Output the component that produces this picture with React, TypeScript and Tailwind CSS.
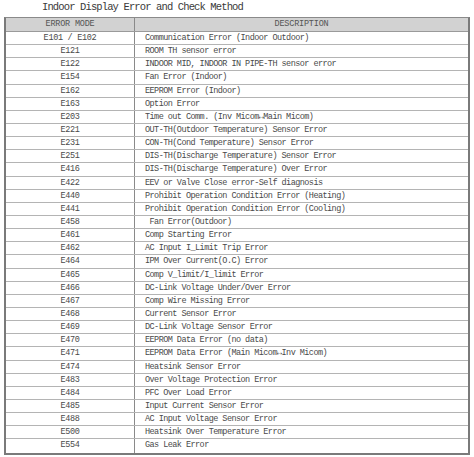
import React from "react";

const rows: [string, string][] = [
  ["E101 / E102", "Communication Error (Indoor Outdoor)"],
  ["E121", "ROOM TH sensor error"],
  ["E122", "INDOOR MID, INDOOR IN PIPE-TH sensor error"],
  ["E154", "Fan Error (Indoor)"],
  ["E162", "EEPROM Error (Indoor)"],
  ["E163", "Option Error"],
  ["E203", "Time out Comm. (Inv Micom\u2194Main Micom)"],
  ["E221", "OUT-TH(Outdoor Temperature) Sensor Error"],
  ["E231", "CON-TH(Cond Temperature) Sensor Error"],
  ["E251", "DIS-TH(Discharge Temperature) Sensor Error"],
  ["E416", "DIS-TH(Discharge Temperature) Over Error"],
  ["E422", "EEV or Valve Close error-Self diagnosis"],
  ["E440", "Prohibit Operation Condition Error (Heating)"],
  ["E441", "Prohibit Operation Condition Error (Cooling)"],
  ["E458", " Fan Error(Outdoor)"],
  ["E461", "Comp Starting Error"],
  ["E462", "AC Input I_Limit Trip Error"],
  ["E464", "IPM Over Current(O.C) Error"],
  ["E465", "Comp V_limit/I_limit Error"],
  ["E466", "DC-Link Voltage Under/Over Error"],
  ["E467", "Comp Wire Missing Error"],
  ["E468", "Current Sensor Error"],
  ["E469", "DC-Link Voltage Sensor Error"],
  ["E470", "EEPROM Data Error (no data)"],
  ["E471", "EEPROM Data Error (Main Micom\u2194Inv Micom)"],
  ["E474", "Heatsink Sensor Error"],
  ["E483", "Over Voltage Protection Error"],
  ["E484", "PFC Over Load Error"],
  ["E485", "Input Current Sensor Error"],
  ["E488", "AC Input Voltage Sensor Error"],
  ["E500", "Heatsink Over Temperature Error"],
  ["E554", "Gas Leak Error"],
];

export default function App() {
  return (
    <div className="w-[474px] h-[457px] bg-white overflow-hidden font-['Liberation_Mono','DejaVu_Sans_Mono',monospace] text-[#4a4a4a]">
      <div className="h-[17px] pl-[42px] pt-[1px] text-[10.5px] leading-[13px] tracking-[-0.87px] text-[#3a3a3a]">
        Indoor Display Error and Check Method
      </div>
      <div className="ml-[4px] w-[466px] border-t border-x-2 border-b-2 border-t-[#8a8a8a] border-x-[#7a7a7a] border-b-[#7a7a7a]">
        <div className="flex h-[14px] bg-[#d2d2d2] border-b border-[#9a9a9a] text-[8.5px] leading-[13px] tracking-[-0.2px] text-[#555]">
          <div className="w-[129px] border-r border-[#8a8a8a] text-center">ERROR MODE</div>
          <div className="flex-1 text-center">DESCRIPTION</div>
        </div>
        {rows.map(([code, desc], i) => (
          <div
            key={code}
            className={`flex h-[13.15px] text-[8.5px] leading-[12px] tracking-[-0.55px] ${
              i < rows.length - 1 ? "border-b border-[#b4b4b4]" : ""
            }`}
          >
            <div className="w-[129px] border-r border-[#8a8a8a] text-center tracking-[-0.3px]">{code}</div>
            <div className="flex-1 pl-[10px] whitespace-pre">{desc}</div>
          </div>
        ))}
      </div>
    </div>
  );
}
